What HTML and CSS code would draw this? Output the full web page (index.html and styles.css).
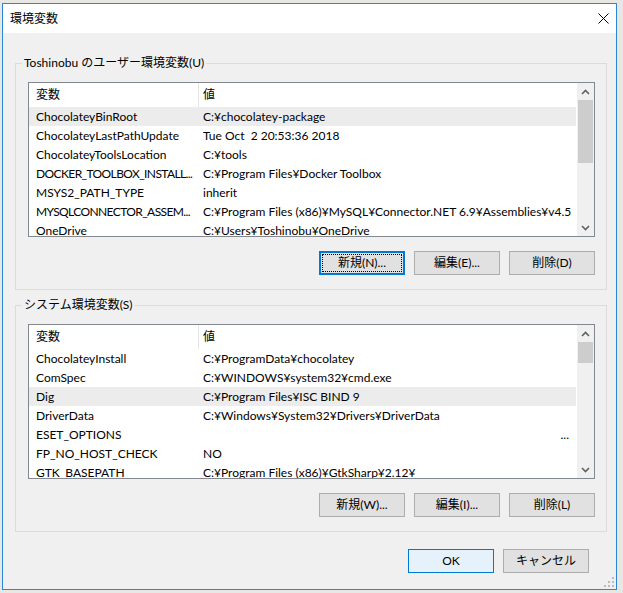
FILE: index.html
```html
<!DOCTYPE html>
<html lang="ja">
<head>
<meta charset="utf-8">
<title>環境変数</title>
<link rel="stylesheet" href="styles.css">
</head>
<body>
<div class="window">
  <div class="titlebar">
    <span class="title">環境変数</span>
    <span class="close">
      <svg width="11" height="11" viewBox="0 0 11 11"><path d="M0.5 0.5 L10.5 10.5 M10.5 0.5 L0.5 10.5" stroke="#000" stroke-width="1" fill="none"/></svg>
    </span>
  </div>
  <div class="content">
    <div class="group">
      <div class="group-label">Toshinobu のユーザー環境変数(U)</div>
      <div class="list">
        <div class="list-body">
          <div class="row head"><span class="c1">変数</span><span class="c2">値</span></div>
          <div class="row sel"><span class="c1">ChocolateyBinRoot</span><span class="c2">C:¥chocolatey-package</span></div>
          <div class="row"><span class="c1">ChocolateyLastPathUpdate</span><span class="c2">Tue Oct  2 20:53:36 2018</span></div>
          <div class="row"><span class="c1">ChocolateyToolsLocation</span><span class="c2">C:¥tools</span></div>
          <div class="row"><span class="c1 trunc">DOCKER_TOOLBOX_INSTALL...</span><span class="c2">C:¥Program Files¥Docker Toolbox</span></div>
          <div class="row"><span class="c1">MSYS2_PATH_TYPE</span><span class="c2">inherit</span></div>
          <div class="row"><span class="c1 trunc">MYSQLCONNECTOR_ASSEM...</span><span class="c2">C:¥Program Files (x86)¥MySQL¥Connector.NET 6.9¥Assemblies¥v4.5</span></div>
          <div class="row"><span class="c1">OneDrive</span><span class="c2">C:¥Users¥Toshinobu¥OneDrive</span></div>
        </div>
        <div class="vscroll">
          <div class="arrow"><svg width="9" height="6" viewBox="0 0 9 6"><path d="M1 5 L4.5 1.5 L8 5" stroke="#606060" stroke-width="1.6" fill="none"/></svg></div>
          <div class="thumb thumb-user"></div>
          <div class="track"></div>
          <div class="arrow"><svg width="9" height="6" viewBox="0 0 9 6"><path d="M1 1 L4.5 4.5 L8 1" stroke="#606060" stroke-width="1.6" fill="none"/></svg></div>
        </div>
      </div>
      <div class="buttons">
        <button class="btn focus">新規(N)...</button>
        <button class="btn">編集(E)...</button>
        <button class="btn">削除(D)</button>
      </div>
    </div>

    <div class="group group2">
      <div class="group-label">システム環境変数(S)</div>
      <div class="list">
        <div class="list-body">
          <div class="row head"><span class="c1">変数</span><span class="c2">値</span></div>
          <div class="row"><span class="c1">ChocolateyInstall</span><span class="c2">C:¥ProgramData¥chocolatey</span></div>
          <div class="row"><span class="c1">ComSpec</span><span class="c2">C:¥WINDOWS¥system32¥cmd.exe</span></div>
          <div class="row sel"><span class="c1">Dig</span><span class="c2">C:¥Program Files¥ISC BIND 9</span></div>
          <div class="row"><span class="c1">DriverData</span><span class="c2">C:¥Windows¥System32¥Drivers¥DriverData</span></div>
          <div class="row"><span class="c1">ESET_OPTIONS</span><span class="c2 right">...</span></div>
          <div class="row"><span class="c1">FP_NO_HOST_CHECK</span><span class="c2">NO</span></div>
          <div class="row"><span class="c1">GTK_BASEPATH</span><span class="c2">C:¥Program Files (x86)¥GtkSharp¥2.12¥</span></div>
        </div>
        <div class="vscroll">
          <div class="arrow"><svg width="9" height="6" viewBox="0 0 9 6"><path d="M1 5 L4.5 1.5 L8 5" stroke="#606060" stroke-width="1.6" fill="none"/></svg></div>
          <div class="thumb thumb-sys"></div>
          <div class="track"></div>
          <div class="arrow"><svg width="9" height="6" viewBox="0 0 9 6"><path d="M1 1 L4.5 4.5 L8 1" stroke="#606060" stroke-width="1.6" fill="none"/></svg></div>
        </div>
      </div>
      <div class="buttons">
        <button class="btn">新規(W)...</button>
        <button class="btn">編集(I)...</button>
        <button class="btn">削除(L)</button>
      </div>
    </div>

    <div class="footer">
      <button class="btn default">OK</button>
      <button class="btn">キャンセル</button>
    </div>
  </div>
  <svg class="grip" width="12" height="12" viewBox="0 0 12 12">
    <rect x="9" y="1" width="2" height="2" fill="#bcbcbc"/>
    <rect x="5" y="5" width="2" height="2" fill="#bcbcbc"/>
    <rect x="9" y="5" width="2" height="2" fill="#bcbcbc"/>
    <rect x="1" y="9" width="2" height="2" fill="#bcbcbc"/>
    <rect x="5" y="9" width="2" height="2" fill="#bcbcbc"/>
    <rect x="9" y="9" width="2" height="2" fill="#bcbcbc"/>
  </svg>
</div>
</body>
</html>
```

FILE: styles.css
```css
html, body {
  margin: 0;
  padding: 0;
}
body {
  background: #e8e7e3;
  font-family: "Lato", "Noto Sans CJK JP", sans-serif;
  font-size: 12px;
  color: #000;
  width: 623px;
  height: 593px;
  overflow: hidden;
}
.window {
  position: relative;
  box-sizing: border-box;
  margin: 3px 0 0 2px;
  width: 615px;
  height: 587px;
  border: 1px solid #2a86d6;
  background: #f0f0f0;
  display: flex;
  flex-direction: column;
}
.titlebar {
  height: 29px;
  background: #fff;
  display: flex;
  align-items: center;
  justify-content: space-between;
  padding-left: 7px;
}
.title {
  line-height: 16px;
}
.close {
  width: 24px;
  height: 29px;
  margin-right: 1px;
  display: flex;
  align-items: center;
  justify-content: center;
}
.close svg {
  display: block;
}
.content {
  padding: 0 9px 0 12px;
}
.group {
  margin-top: 30px;
  border: 1px solid #dcdcdc;
  padding: 0 11px 14px 12px;
}
.group2 {
  margin-top: 15px;
}
.group-label {
  width: fit-content;
  margin: -9px 0 0 -6px;
  padding: 0 2px;
  line-height: 16px;
  background: #f0f0f0;
}
.list {
  margin-top: 11px;
  box-sizing: border-box;
  height: 155px;
  border: 1px solid #828790;
  background: #fff;
  display: flex;
  overflow: hidden;
}
.list-body {
  flex: 1;
  overflow: hidden;
  margin-right: 1px;
}
.row {
  display: flex;
  height: 19px;
  line-height: 19px;
  white-space: pre;
}
.row.head {
  height: 24px;
  line-height: 24px;
}
.row.sel {
  background: #ececec;
}
.c1 {
  box-sizing: border-box;
  width: 170px;
  flex: none;
  padding-left: 7px;
  overflow: hidden;
}
.c1.trunc {
  letter-spacing: -0.6px;
}
.head .c1 {
  border-right: 1px solid #e5e5e5;
}
.c2 {
  flex: 1;
  padding-left: 4px;
  overflow: hidden;
}
.c2.right {
  text-align: right;
  padding-right: 7px;
}
.vscroll {
  width: 17px;
  flex: none;
  background: #f0f0f0;
  display: flex;
  flex-direction: column;
}
.arrow {
  height: 17px;
  display: flex;
  align-items: center;
  justify-content: center;
}
.arrow svg {
  display: block;
}
.thumb {
  margin: 0 1px;
  background: #cdcdcd;
}
.thumb-user {
  height: 63px;
}
.thumb-sys {
  height: 21px;
}
.track {
  flex: 1;
}
.buttons {
  margin-top: 14px;
  display: flex;
  justify-content: flex-end;
  gap: 9px;
}
.btn {
  box-sizing: border-box;
  width: 86px;
  height: 24px;
  margin: 0;
  padding: 0;
  background: #e1e1e1;
  border: 1px solid #adadad;
  font-family: inherit;
  font-size: 12px;
  color: #000;
  line-height: 16px;
}
.btn.focus {
  border: 2px solid #0078d7;
  outline: 1px dotted #000;
  outline-offset: -4px;
}
.btn.default {
  border: 1px solid #0078d7;
  background: #e5f1fb;
}
.footer {
  margin-top: 17px;
  display: flex;
  justify-content: flex-end;
  gap: 9px;
  padding-right: 18px;
}
.grip {
  position: absolute;
  right: 1px;
  bottom: 1px;
}
```
